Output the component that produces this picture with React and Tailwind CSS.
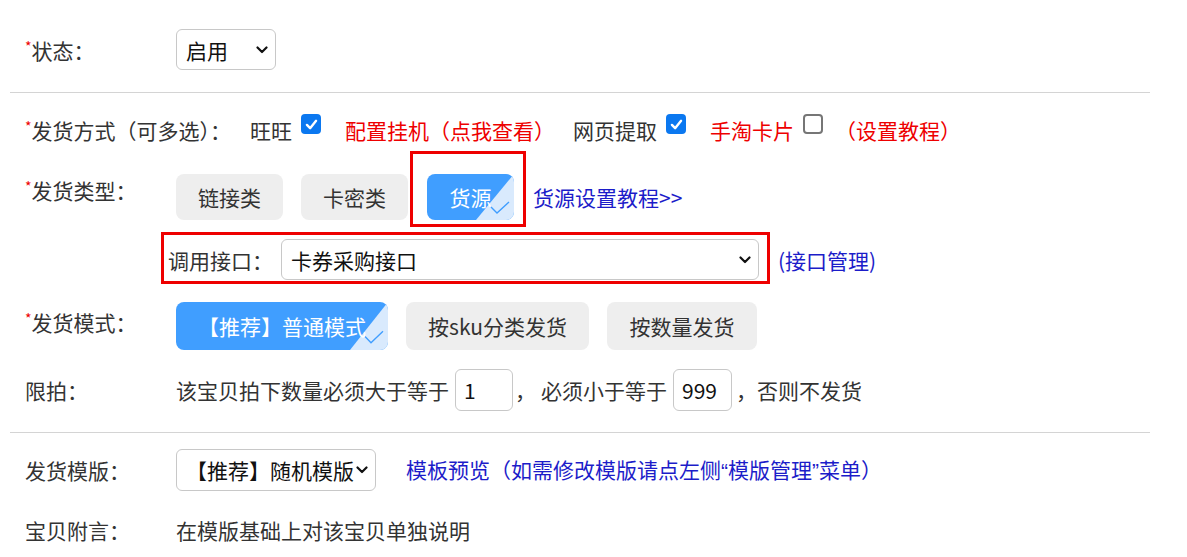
import React from 'react';

function Chevron() {
  return (
    <svg viewBox="0 0 12 8" className="w-[12px] h-[8px] shrink-0" fill="none" stroke="#111" strokeWidth="2.2" strokeLinecap="round" strokeLinejoin="round">
      <path d="M1.5 1.5 6 6l4.5-4.5" />
    </svg>
  );
}

function FakeSelect({ value, className = '' }) {
  return (
    <div className={`flex items-center justify-between h-[41px] pl-[9px] pr-[7px] border border-[#c8c8c8] rounded-[6px] bg-white text-[#111] ${className}`}>
      <span>{value}</span>
      <Chevron />
    </div>
  );
}

function Required({ children }) {
  return (
    <span>
      <span className="text-[#e00] text-[14px] align-top leading-[22px]">*</span>
      {children}
    </span>
  );
}

function Check({ checked }) {
  if (!checked) {
    return <span className="block w-[20px] h-[20px] mb-[12px] rounded-[4px] border-2 border-[#767676] bg-white shrink-0" />;
  }
  return (
    <span className="flex items-center justify-center w-[20px] h-[20px] mb-[12px] rounded-[4px] bg-[#0b78f0] shrink-0">
      <svg viewBox="0 0 14 12" className="w-[13px] h-[11px]" fill="none" stroke="#fff" strokeWidth="2.6" strokeLinecap="round" strokeLinejoin="round">
        <path d="M2 6.5 5.5 10 12 2" />
      </svg>
    </span>
  );
}

function OptionButton({ children, active, className = '', h = 'h-[46px]' }) {
  return (
    <div className={`relative overflow-hidden ${h} rounded-[8px] flex items-center justify-center shrink-0 ${active ? 'bg-[#409eff] text-white' : 'bg-[#eeeeee] text-[#333]'} ${className}`}>
      {active && (
        <svg className="absolute right-0 bottom-0 w-[38px] h-full" viewBox="0 0 38 46" preserveAspectRatio="none">
          <polygon points="38,0 38,46 0,46" fill="#d9eafd" />
          <path d="M15 33 21 39 33 28" stroke="#409eff" fill="none" strokeWidth="1.4" />
        </svg>
      )}
      <span className="relative">{children}</span>
    </div>
  );
}

export default function App() {
  return (
    <div className="min-h-screen bg-white text-[#333] text-[21px] leading-[30px] font-['Microsoft_YaHei','Noto_Sans_CJK_SC','Noto_Sans',sans-serif]">
      <div className="w-[1160px] px-[10px] pt-[29px]">
        {/* 状态 */}
        <div className="flex items-center h-[41px] pl-[15px]">
          <div className="w-[151px]"><Required>状态：</Required></div>
          <FakeSelect value="启用" className="w-[100px]" />
        </div>

        <div className="mt-[22px] h-px bg-[#d4d4d4]" />

        {/* 发货方式 */}
        <div className="mt-[22px] flex items-center h-[30px] pl-[15px] whitespace-nowrap">
          <span className="w-[225px]"><Required>发货方式（可多选）：</Required></span>
          <span className="w-[51px]">旺旺</span>
          <Check checked />
          <span className="ml-[24px] w-[228px] text-[#e00]">配置挂机（点我查看）</span>
          <span className="w-[93px]">网页提取</span>
          <Check checked />
          <span className="ml-[24px] w-[93px] text-[#e00]">手淘卡片</span>
          <Check checked={false} />
          <span className="ml-[12px] text-[#e00]">（设置教程）</span>
        </div>

        {/* 发货类型 */}
        <div className="mt-[29px] flex items-start pl-[15px]">
          <div className="w-[151px] mt-[1px]"><Required>发货类型：</Required></div>
          <div className="flex items-center gap-[18px]">
            <OptionButton className="w-[107px]">链接类</OptionButton>
            <OptionButton className="w-[107px]">卡密类</OptionButton>
            <div className="relative ml-[1px]">
              <OptionButton active className="w-[87px]">货源</OptionButton>
              <span className="absolute left-[-17px] top-[-23px] w-[116px] h-[76px] border-[3px] border-[#e00] pointer-events-none" />
            </div>
          </div>
          <a className="ml-[19px] mt-[8px] text-[#1c1cc9]">货源设置教程&gt;&gt;</a>
        </div>

        {/* 调用接口 */}
        <div className="relative mt-[19px] ml-[158px] flex items-center h-[41px]">
          <span className="w-[113px]">调用接口：</span>
          <FakeSelect value="卡券采购接口" className="w-[478px]" />
          <a className="ml-[19px] text-[#1c1cc9]">(接口管理)</a>
          <span className="absolute left-[-7px] top-[-7px] w-[609px] h-[52px] border-[3px] border-[#e00] pointer-events-none" />
        </div>

        {/* 发货模式 */}
        <div className="mt-[22px] flex items-start pl-[15px]">
          <div className="w-[151px] mt-[5px]"><Required>发货模式：</Required></div>
          <div className="flex items-center gap-[18px]">
            <OptionButton active h="h-[48px]" className="w-[212px]">【推荐】普通模式</OptionButton>
            <OptionButton h="h-[48px]" className="w-[183px]">按sku分类发货</OptionButton>
            <OptionButton h="h-[48px]" className="w-[150px]">按数量发货</OptionButton>
          </div>
        </div>

        {/* 限拍 */}
        <div className="mt-[19px] flex items-center h-[42px] pl-[15px] whitespace-nowrap">
          <div className="w-[151px]">限拍：</div>
          <span>该宝贝拍下数量必须大于等于</span>
          <div className="ml-[6px] w-[58px] h-[42px] flex items-center pl-[8px] border border-[#c8c8c8] rounded-[6px] text-[#111]">1</div>
          <span className="ml-[2px]">，</span>
          <span className="ml-[5px]">必须小于等于</span>
          <div className="ml-[6px] w-[59px] h-[42px] flex items-center pl-[8px] border border-[#c8c8c8] rounded-[6px] text-[#111]">999</div>
          <span className="ml-[4px]">，否则不发货</span>
        </div>

        <div className="mt-[21px] h-px bg-[#d4d4d4]" />

        {/* 发货模版 */}
        <div className="mt-[16px] flex items-center h-[42px] pl-[15px] whitespace-nowrap">
          <div className="w-[151px]">发货模版：</div>
          <FakeSelect value="【推荐】随机模版" className="w-[200px] h-[42px]" />
          <a className="ml-[30px] text-[#1c1cc9]">
            模板预览（如需修改模版请点左侧<span className="font-['Liberation_Sans']">“</span>模版管理<span className="font-['Liberation_Sans']">”</span>菜单）
          </a>
        </div>

        {/* 宝贝附言 */}
        <div className="mt-[24px] flex items-center h-[30px] pl-[15px]">
          <div className="w-[151px]">宝贝附言：</div>
          <span>在模版基础上对该宝贝单独说明</span>
        </div>
      </div>
    </div>
  );
}
